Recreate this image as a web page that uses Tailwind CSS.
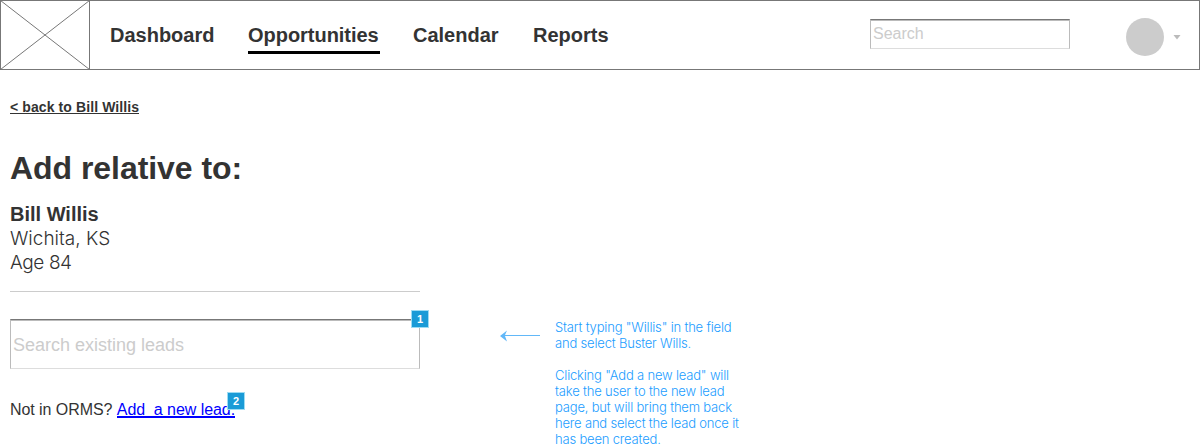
<!DOCTYPE html>
<html lang="en">
<head>
<meta charset="utf-8">
<title>Add relative</title>
<script src="https://cdn.jsdelivr.net/npm/@tailwindcss/browser@4"></script>
</head>
<body class="h-[447px] overflow-hidden bg-white font-['Liberation_Sans',Arial,sans-serif] text-[#333]">
<header class="flex h-[70px] border border-[#777]">
  <svg class="-ml-px -mt-px h-[70px] w-[90px] shrink-0" viewBox="0 0 90 70" fill="none" stroke="#777"><path d="M.5.5h89v69H.5zM.5.5l89 69M89.5.5l-89 69"/></svg>
  <nav class="ml-5 flex pt-[19px] text-xl leading-[30px] font-bold">
    <a class="w-[138px]">Dashboard</a>
    <a class="mr-[33px] h-[34px] w-[132px] border-b-[3px] border-black tracking-[-0.03px]">Opportunities</a>
    <a class="w-[120px]">Calendar</a>
    <a>Reports</a>
  </nav>
  <div class="mr-[18px] ml-auto flex">
    <div class="mt-[18px] h-[30px] w-[200px] border border-x-[#bbb] border-t-[#777] border-b-[#ddd] pl-0.5 text-base leading-[27px] text-[#ccc] shadow-[inset_0_1px_0_#bbb]">Search</div>
    <div class="mt-[17px] ml-14 size-[38px] rounded-full bg-[#ccc]"></div>
    <svg class="mt-[34px] ml-[9px] h-[5px] w-2" viewBox="0 0 8 5" fill="#bbb"><path d="M.5 0h7L4 4.5z"/></svg>
  </div>
</header>
<main class="flex pl-[10px]">
  <section class="w-[410px]">
    <a class="mt-[29px] flex h-4 text-sm leading-4 font-bold tracking-[0.1px]"><span class="h-[15px] border-b border-[#333]">&lt; back to Bill Willis</span></a>
    <h1 class="mt-[35px] text-[32px] leading-9 font-bold tracking-[-0.05px]">Add relative to:</h1>
    <div class="mt-4 text-xl leading-6">
      <p class="font-bold">Bill Willis</p>
      <div class="pt-px font-['Inter'] text-[19px] font-light">
        <p>Wichita, KS</p>
        <p class="tracking-[-0.4px]">Age 84</p>
      </div>
    </div>
    <div class="mt-4 border-t border-[#ccc]"></div>
    <div class="relative mt-[27px] h-[50px] border border-x-[#bbb] border-t-[#777] border-b-[#ddd] pl-0.5 text-lg leading-[51px] text-[#ccc] shadow-[inset_0_1px_0_#bbb]">Search existing leads
      <span class="absolute -top-[10px] -right-[10px] size-[18px] border border-[#9ddcf3] bg-[#1a9bd7] text-center text-[11px] leading-4 font-bold text-white">1</span>
    </div>
    <p class="mt-[31px] text-base leading-5 tracking-[-0.06px] whitespace-pre">Not in ORMS? <span class="relative inline-block h-[18px] border-b-2 border-[#00f] text-[#00f]">Add  a new lead.<span class="absolute -top-[8px] -right-[10px] size-[18px] border border-[#9ddcf3] bg-[#1a9bd7] text-center text-[11px] leading-4 font-bold text-white">2</span></span></p>
  </section>
  <aside class="ml-20 flex">
    <svg class="mt-[260px] h-3 w-10" viewBox="0 0 40 12" fill="#62b8f8"><path d="M0 6 7 .5 5 5h35v1H5l2 5.5z"/></svg>
    <div class="mt-[249px] ml-[15px] font-['Inter'] text-[13px] leading-4 font-light tracking-[-0.18px] whitespace-nowrap text-[#1b9dff]">
      <p>Start typing "Willis" in the field<br>and select Buster Wills.</p>
      <p class="mt-4">Clicking "Add a new lead" will<br>take the user to the new lead<br>page, but will bring them back<br>here and select the lead once it<br>has been created.</p>
    </div>
  </aside>
</main>
</body>
</html>
